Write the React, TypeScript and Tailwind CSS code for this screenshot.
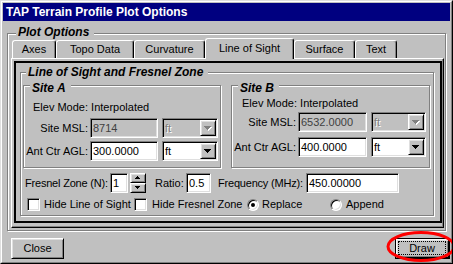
import type { ReactNode } from 'react'

const sunken =
  'border border-t-[#808080] border-l-[#808080] border-r-white border-b-white shadow-[inset_1px_1px_0_#000,inset_-1px_-1px_0_#dfdfdf]'
const raised =
  'border border-t-white border-l-white border-r-black border-b-black shadow-[inset_1px_1px_0_#dfdfdf,inset_-1px_-1px_0_#808080]'
const etched = 'border border-[#808080] shadow-[inset_1px_1px_0_#fff,1px_1px_0_#fff]'
const caption = 'bg-[#c0c0c0] pl-[2px] pr-[5px] text-[12px] leading-[13px] font-bold italic whitespace-nowrap'

function Arrow({ up, disabled, small }: { up?: boolean; disabled?: boolean; small?: boolean }) {
  const rows = small ? [5, 3, 1] : [7, 5, 3, 1]
  const size = rows[0]
  const cells = (fill: string, dx: number) =>
    rows.map((n, i) => (
      <rect
        key={fill + i}
        x={(size - n) / 2 + dx}
        y={(up ? rows.length - 1 - i : i) + dx}
        width={n}
        height={1}
        fill={fill}
      />
    ))
  return (
    <svg width={size + 1} height={rows.length + 1} shapeRendering="crispEdges">
      {disabled && cells('#fff', 1)}
      {cells(disabled ? '#808080' : '#000', 0)}
    </svg>
  )
}

function TextBox({ value, w, disabled }: { value: string; w: string; disabled?: boolean }) {
  return (
    <div
      className={`${w} h-[20px] ${sunken} ${
        disabled ? 'bg-[#c0c0c0] text-[#404040]' : 'bg-white'
      } flex items-center pl-[2px] whitespace-nowrap`}
    >
      {value}
    </div>
  )
}

function Combo({ w, disabled }: { w: string; disabled?: boolean }) {
  return (
    <div className={`${w} h-[20px] ${sunken} ${disabled ? 'bg-[#c0c0c0]' : 'bg-white'} flex items-stretch p-[1px]`}>
      <span
        className={`flex-1 flex items-center pl-[1px] ${
          disabled ? 'text-[#808080] [text-shadow:1px_1px_0_#fff]' : ''
        }`}
      >
        ft
      </span>
      <div className={`w-[16px] bg-[#c0c0c0] ${raised} flex items-center justify-center`}>
        <Arrow disabled={disabled} />
      </div>
    </div>
  )
}

function Spinner() {
  return (
    <div className="w-[16px] h-[20px] flex flex-col">
      <div className={`h-[10px] bg-[#c0c0c0] ${raised} flex items-center justify-center`}>
        <Arrow up small />
      </div>
      <div className={`h-[10px] bg-[#c0c0c0] ${raised} flex items-center justify-center`}>
        <Arrow small />
      </div>
    </div>
  )
}

function CheckBox() {
  return <div className={`w-[13px] h-[13px] bg-white ${sunken}`} />
}

function Radio({ checked }: { checked?: boolean }) {
  return (
    <div className={`w-[12px] h-[12px] rounded-full bg-white ${sunken} flex items-center justify-center`}>
      {checked && <div className="w-[4px] h-[4px] rounded-full bg-black" />}
    </div>
  )
}

function Row({ label, value, inputW, comboW, disabled, className }: {
  label: string
  value: string
  inputW: string
  comboW: string
  disabled?: boolean
  className: string
}) {
  return (
    <div className={`flex items-center h-[20px] ${className}`}>
      <span className="w-[64px] text-right whitespace-nowrap">{label}</span>
      <div className="ml-[2px]">
        <TextBox value={value} w={inputW} disabled={disabled} />
      </div>
      <div className="ml-[4px]">
        <Combo w={comboW} disabled={disabled} />
      </div>
    </div>
  )
}

function Tab({ label, w, active }: { label: string; w: string; active?: boolean }) {
  if (active) {
    return (
      <div
        className={`${w} h-[21px] -mb-[1px] relative z-10 bg-[#c0c0c0] border-l border-t border-r border-l-white border-t-white border-r-black rounded-t-[3px] shadow-[inset_-1px_0_0_#808080] flex items-center justify-center pb-[2px]`}
      >
        {label}
      </div>
    )
  }
  return (
    <div
      className={`${w} h-[18px] border-l border-t border-r border-l-white border-t-white border-r-black rounded-t-[3px] shadow-[inset_-1px_0_0_#808080] flex items-center justify-center`}
    >
      {label}
    </div>
  )
}

function Group({ label, className, labelClass, children }: {
  label: string
  className: string
  labelClass: string
  children: ReactNode
}) {
  return (
    <div className={`flex flex-col items-start ${etched} ${className}`}>
      <span className={`${caption} ${labelClass}`}>{label}</span>
      {children}
    </div>
  )
}

export default function App() {
  return (
    <div className="relative w-[453px] h-[264px] overflow-hidden bg-[#c0c0c0] border border-t-[#dfdfdf] border-l-[#dfdfdf] border-r-black border-b-black font-['Liberation_Sans',Arial,sans-serif] text-[11px] leading-[13px] text-black">
      <div className="h-full border border-t-white border-l-white border-r-[#808080] border-b-[#808080] p-[1px] flex flex-col">
        <div className="h-[18px] bg-[#000080] text-white font-bold text-[12px] flex items-center pl-[3px] whitespace-nowrap">
          TAP Terrain Profile Plot Options
        </div>

        {/* Plot Options */}
        <Group label="Plot Options" className="mt-[12px] ml-[4px] w-[439px] h-[198px]" labelClass="-mt-[8px] ml-[8px]">
          <div className="-mt-[1px] ml-[4px] h-[20px] flex items-end">
            <Tab label="Axes" w="w-[44px]" />
            <Tab label="Topo Data" w="w-[78px]" />
            <Tab label="Curvature" w="w-[71px]" />
            <Tab label="Line of Sight" w="w-[89px]" active />
            <Tab label="Surface" w="w-[61px]" />
            <Tab label="Text" w="w-[42px]" />
          </div>

          <div className="ml-[3px] w-[433px] h-[170px] border border-t-white border-l-white border-r-black border-b-black shadow-[inset_-1px_-1px_0_#808080]">
            <div className="mt-[2px] ml-[2px] w-[428px] h-[162px] border-2 border-black">
              <Group
                label="Line of Sight and Fresnel Zone"
                className="mt-[9px] ml-[4px] w-[414px] h-[144px]"
                labelClass="-mt-[7px] ml-[5px]"
              >
                <div className="mt-[6px] ml-[2px] flex">
                  <Group label="Site A" className="w-[198px] h-[83px]" labelClass="-mt-[4px] ml-[6px]">
                    <span className="mt-[6px] ml-[9px] whitespace-nowrap">Elev Mode: Interpolated</span>
                    <Row label="Site MSL:" value="8714" inputW="w-[68px]" comboW="w-[56px]" disabled className="mt-[4px]" />
                    <Row label="Ant Ctr AGL:" value="300.0000" inputW="w-[68px]" comboW="w-[56px]" className="mt-[3px]" />
                  </Group>
                  <Group label="Site B" className="ml-[10px] w-[199px] h-[83px]" labelClass="-mt-[4px] ml-[6px]">
                    <span className="mt-[2px] ml-[10px] whitespace-nowrap">Elev Mode: Interpolated</span>
                    <Row label="Site MSL:" value="6532.0000" inputW="w-[69px]" comboW="w-[55px]" disabled className="mt-[2px]" />
                    <Row label="Ant Ctr AGL:" value="400.0000" inputW="w-[69px]" comboW="w-[55px]" className="mt-[5px]" />
                  </Group>
                </div>

                <div className="mt-[5px] ml-[4px] h-[20px] flex items-center whitespace-nowrap">
                  <span className="w-[85px] tracking-[-0.2px]">Fresnel Zone (N):</span>
                  <TextBox value="1" w="w-[18px]" />
                  <div className="ml-[2px]">
                    <Spinner />
                  </div>
                  <span className="ml-[9px] w-[31px]">Ratio:</span>
                  <TextBox value="0.5" w="w-[25px]" />
                  <span className="ml-[7px] w-[88px] tracking-[-0.2px]">Frequency (MHz):</span>
                  <TextBox value="450.00000" w="w-[93px]" />
                </div>

                <div className="mt-[5px] ml-[6px] h-[13px] flex items-center whitespace-nowrap">
                  <CheckBox />
                  <span className="ml-[4px] w-[90px]">Hide Line of Sight</span>
                  <CheckBox />
                  <span className="ml-[5px] w-[95px]">Hide Fresnel Zone</span>
                  <Radio checked />
                  <span className="ml-[3px] w-[68px]">Replace</span>
                  <Radio />
                  <span className="ml-[4px]">Append</span>
                </div>
              </Group>
            </div>
          </div>
        </Group>

        <div className="mt-[7px] h-[21px] flex justify-between">
          <div className={`ml-[8px] w-[53px] h-[21px] ${raised} flex items-center justify-center`}>Close</div>
          <div className="w-[55px] h-[21px] border border-black">
            <div className={`h-full ${raised} flex p-[1px] pr-[2px] pb-[2px]`}>
              <span className="flex-1 border border-dotted border-black flex items-center justify-center">Draw</span>
            </div>
          </div>
        </div>
      </div>

      <svg className="absolute left-[384px] top-[229px]" width="72" height="34">
        <ellipse cx="36" cy="16.5" rx="33" ry="14" fill="none" stroke="#ff0000" strokeWidth="3" />
      </svg>
    </div>
  )
}
